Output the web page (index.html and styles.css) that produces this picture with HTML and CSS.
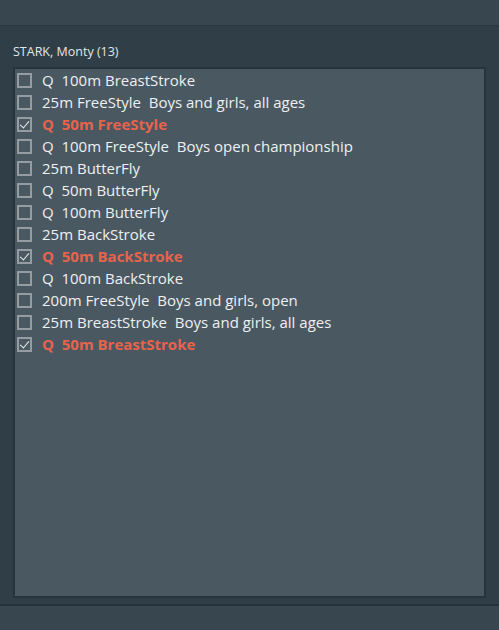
FILE: index.html
```html
<!DOCTYPE html>
<html>
<head>
<meta charset="utf-8">
<link rel="stylesheet" href="styles.css">
</head>
<body>
<div class="app">
  <div class="topbar"></div>
  <div class="main">
    <div class="label">STARK, Monty (13)</div>
    <div class="listbox">
      <div class="row"><span class="cb"></span><span class="txt">Q&nbsp; 100m BreastStroke</span></div>
      <div class="row"><span class="cb"></span><span class="txt">25m FreeStyle&nbsp; Boys and girls, all ages</span></div>
      <div class="row sel"><span class="cb on"></span><span class="txt">Q&nbsp; 50m FreeStyle</span></div>
      <div class="row"><span class="cb"></span><span class="txt">Q&nbsp; 100m FreeStyle&nbsp; Boys open championship</span></div>
      <div class="row"><span class="cb"></span><span class="txt">25m ButterFly</span></div>
      <div class="row"><span class="cb"></span><span class="txt">Q&nbsp; 50m ButterFly</span></div>
      <div class="row"><span class="cb"></span><span class="txt">Q&nbsp; 100m ButterFly</span></div>
      <div class="row"><span class="cb"></span><span class="txt">25m BackStroke</span></div>
      <div class="row sel"><span class="cb on"></span><span class="txt">Q&nbsp; 50m BackStroke</span></div>
      <div class="row"><span class="cb"></span><span class="txt">Q&nbsp; 100m BackStroke</span></div>
      <div class="row"><span class="cb"></span><span class="txt">200m FreeStyle&nbsp; Boys and girls, open</span></div>
      <div class="row"><span class="cb"></span><span class="txt">25m BreastStroke&nbsp; Boys and girls, all ages</span></div>
      <div class="row sel"><span class="cb on"></span><span class="txt">Q&nbsp; 50m BreastStroke</span></div>
    </div>
  </div>
  <div class="bottombar"></div>
</div>
</body>
</html>
```
FILE: styles.css
```css
* { box-sizing: border-box; }
html, body { margin: 0; padding: 0; }
body {
  width: 499px;
  height: 630px;
  overflow: hidden;
  background: #2f3e47;
  font-family: "Open Sans", "Noto Sans", sans-serif;
}
.app {
  display: flex;
  flex-direction: column;
  height: 630px;
}
.topbar {
  height: 26px;
  background: #37464f;
  border-bottom: 1px solid #2a373f;
}
.main {
  flex: 1;
  background: #2f3e47;
  padding: 16px 13px 6px 13px;
  display: flex;
  flex-direction: column;
}
.label {
  color: #e3e6e8;
  font-size: 12.5px;
  line-height: 20px;
  height: 25px;
}
.listbox {
  flex: 1;
  background: #4a5862;
  border: 2px solid #27343c;
  padding: 0 0 0 2px;
}
.row {
  height: 22px;
  display: flex;
  align-items: center;
  color: #eef0f1;
  font-size: 15px;
}
.row.sel { color: #e8634c; font-weight: 700; }
.cb {
  width: 15px;
  height: 15px;
  border: 2px solid #959ca2;
  margin-right: 10px;
  flex: none;
  position: relative;
}
.cb.on::after {
  content: "";
  position: absolute;
  left: 3px;
  top: 0px;
  width: 4px;
  height: 8px;
  border-right: 1.5px solid #eef0f1;
  border-bottom: 1.5px solid #eef0f1;
  transform: rotate(40deg);
}
.bottombar {
  height: 26px;
  background: #37464f;
  border-top: 2px solid #25323a;
}
```
